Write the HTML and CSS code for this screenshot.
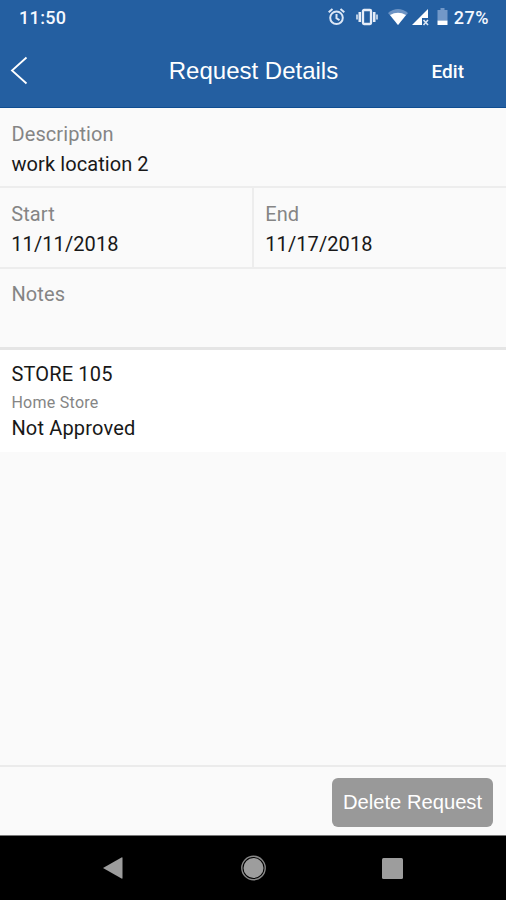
FILE: index.html
```html
<!DOCTYPE html>
<html lang="en">
<head>
<meta charset="utf-8">
<title>Request Details</title>
<link rel="stylesheet" href="styles.css">
</head>
<body>
<div class="screen">
  <div class="status">
    <span class="clock">11:50</span>
    <div class="indicators">
      <svg class="alarm" width="18" height="20" viewBox="0 0 18 20" fill="none" stroke="#dce7f6" stroke-width="2"><circle cx="8.500" cy="10.800" r="6.300"/><path d="M.700 5.200 4.500 2M16.300 5.200 12.500 2M8.500 7v4.300l3 1.800"/></svg>
      <svg class="vibrate" width="24" height="20" viewBox="0 0 24 20" fill="none" stroke="#e6edf8"><rect x="8" y="3" width="8" height="14" rx="1" stroke-width="2.300"/><path d="M4.800 5v10M19.200 5v10" stroke-width="2.600"/><path d="M2 7.500v5M22 7.500v5" stroke-width="2" opacity=".75"/></svg>
      <svg class="wifi" width="20" height="20" viewBox="0 0 20 20"><path d="M0 6Q10-2 20 6L10 18Z" fill="#6c93c4"/><path d="M2 8Q10 3.500 18 8L10 18Z" fill="#fff"/></svg>
      <svg class="signal" width="17" height="20" viewBox="0 0 17 20"><path d="M0 18 16 2V11H10V18Z" fill="#fff"/><path d="m11.500 13 4.500 5m0-5-4.500 5" stroke="#dce7f5" stroke-width="1.600"/></svg>
      <svg class="battery" width="11" height="20" viewBox="0 0 11 20"><path d="M3.500 1h4v2H10.500v10.500H.5V3h3z" fill="#7298c8"/><path d="M.5 13.500h10V18H.5z" fill="#fff"/></svg>
      <span class="percent">27%</span>
    </div>
  </div>
  <header class="bar">
    <svg class="back" width="18" height="30" viewBox="0 0 18 30" fill="none" stroke="#fff" stroke-width="1.800"><path d="M16.500 1.500 2 14.500 16.500 27.500"/></svg>
    <h1>Request Details</h1>
    <span class="edit">Edit</span>
  </header>
  <main>
    <section class="field">
      <div class="label">Description</div>
      <div class="value">work location 2</div>
    </section>
    <div class="dates">
      <section class="field"><div class="label">Start</div><div class="value">11/11/2018</div></section>
      <section class="field"><div class="label">End</div><div class="value">11/17/2018</div></section>
    </div>
    <section class="field notes"><div class="label">Notes</div></section>
    <section class="store">
      <div class="value">STORE 105</div>
      <div class="kind">Home Store</div>
      <div class="value">Not Approved</div>
    </section>
  </main>
  <footer><button class="delete">Delete Request</button></footer>
  <nav>
    <svg width="22" height="26" viewBox="0 0 22 26"><path d="M1 14 19.500 3.500Q20.500 3 20.500 4V24Q20.500 25 19.500 24.500Z" fill="#9d9d9d"/></svg>
    <svg width="26" height="27" viewBox="0 0 26 27"><circle cx="13.500" cy="14" r="11.700" fill="none" stroke="#888" stroke-width="1.400"/><circle cx="13.500" cy="14" r="10" fill="#9d9d9d"/></svg>
    <svg width="22" height="26" viewBox="0 0 22 26"><rect x="0" y="4" width="21" height="21" rx="1.500" fill="#9d9d9d"/></svg>
  </nav>
</div>
</body>
</html>
```
FILE: styles.css
```css
* { box-sizing: border-box; }
body { margin: 0; font-family: Roboto, sans-serif; }
.screen { width: 506px; height: 900px; display: flex; flex-direction: column; background: #fafafa; overflow: hidden; }
.status { height: 35px; padding: 0 17px 0 19px; background: #245fa1; color: #f4f8ff; display: flex; justify-content: space-between; align-items: center; font-size: 18px; font-weight: 500; line-height: 35px; }
.clock { letter-spacing: .35px; }
.indicators { display: flex; align-items: center; }
.indicators svg { display: block; margin-bottom: 2px; }
.indicators .vibrate { margin-left: 9px; }
.indicators .wifi { margin-left: 9px; }
.indicators .signal { margin-left: 4px; }
.indicators .battery { margin-left: 8px; }
.percent { margin-left: 6px; letter-spacing: .5px; }
.bar { height: 73px; padding: 0 42px 0 10px; display: grid; grid-template-columns: 80px 1fr 80px; align-items: center; background: #245fa1; border-bottom: 1px solid #0f4d91; color: #fff; }
h1 { margin: 0; padding-left: 33px; text-align: center; font: 400 24px/30px "Liberation Sans", sans-serif; white-space: nowrap; }
.edit { padding-top: 2px; text-align: right; font-size: 19px; font-weight: 500; line-height: 24px; }
main { flex: 1; }
.field { height: 80px; padding: 12px 11px 0 11.500px; border-bottom: 2px solid #ededed; }
.label, .value { height: 30px; font-size: 20px; line-height: 28px; letter-spacing: .08px; white-space: nowrap; }
.label { color: #858585; }
.value { color: #181818; }
.dates { display: grid; grid-template-columns: 254px 1fr; }
.dates .field { height: 81px; padding-left: 11.300px; }
.dates .field:first-child { border-right: 2px solid #ededed; }
.notes { height: 81px; padding-top: 11px; border-bottom: 3px solid #e5e5e5; }
.store { height: 102px; padding: 10px 11.400px 0; background: #fff; }
.store .value { letter-spacing: .17px; }
.kind { height: 24px; color: #858585; font-size: 16px; line-height: 25px; letter-spacing: .27px; }
footer { height: 71px; padding: 11px 13px 0 0; border-top: 2px solid #ebebeb; border-bottom: 1px solid #777; display: flex; justify-content: flex-end; align-items: flex-start; }
.delete { width: 161px; height: 49px; border: 0; padding: 0 0 2px; border-radius: 6px; background: #999; color: #fff; font: 400 20.200px/24px "Liberation Sans", sans-serif; white-space: nowrap; }
nav { height: 64px; background: #000; display: flex; justify-content: space-between; padding: 18px 102px 0; }
```
